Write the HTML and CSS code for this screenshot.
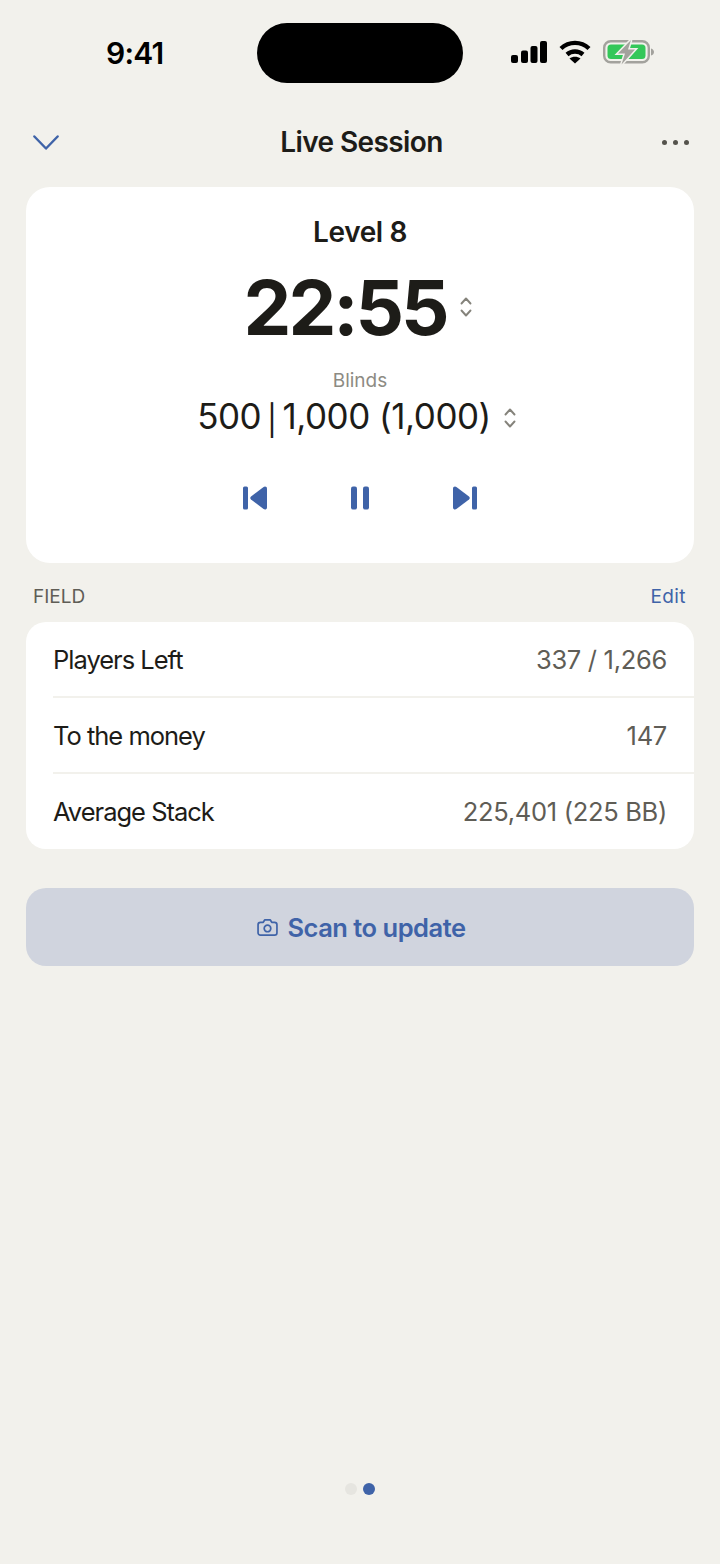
FILE: index.html
```html
<!DOCTYPE html>
<html lang="en">
<head>
    <meta charset="UTF-8">
    <meta name="viewport" content="width=device-width, initial-scale=1.0">
    <title>Live Session</title>
    <link rel="stylesheet" href="styles.css">
</head>
<body>
    <!-- Status bar -->
    <div class="status-bar">
        <div class="status-time">9:41</div>
        <div class="island"></div>
        <div class="status-icons">
            <svg width="36" height="24" viewBox="0 0 36 24">
                <rect x="0" y="15" width="7" height="8" rx="2"/>
                <rect x="10" y="10.500" width="7" height="12.500" rx="2"/>
                <rect x="19.500" y="6" width="7" height="17" rx="2"/>
                <rect x="29" y="1" width="7" height="22" rx="2"/>
            </svg>
            <svg width="32" height="24" viewBox="0 0 32 24" fill="none" stroke="#000" stroke-width="4.400">
                <path d="M2 8.500C10 1 22 1 30 8.500"/>
                <path d="M8 14.500C12.500 10.500 19.500 10.500 24 14.500"/>
                <path d="M16 23.500L10.500 18.500C13.500 16 18.500 16 21.500 18.500Z" fill="#000" stroke="none"/>
            </svg>
            <svg width="52" height="26" viewBox="0 0 52 26">
                <rect x="1.200" y="2.200" width="44.600" height="21" rx="6.500" fill="none" stroke="#a3a29d" stroke-width="2.400"/>
                <rect x="4.500" y="5.500" width="38" height="14.500" rx="3.500" fill="#34c759"/>
                <path d="M48 9.500C50 10 51 11.500 51 13C51 14.500 50 16 48 16.500Z" fill="#a3a29d"/>
                <path d="M28 1L15 14.500H22L18.500 25.500L32 10.500H25Z" fill="#a3a29d" stroke="#f2f1ec" stroke-width="3" paint-order="stroke"/>
            </svg>
        </div>
    </div>

    <!-- Nav -->
    <div class="nav">
        <svg class="nav-back" width="26" height="15" viewBox="0 0 28 16" fill="none" stroke="#3f63a8" stroke-width="2.600" stroke-linecap="round" stroke-linejoin="round">
            <path d="M1.500 1.500L14 14.500L26.500 1.500"/>
        </svg>
        <div class="nav-title">Live Session</div>
        <div class="nav-more"><span></span><span></span><span></span></div>
    </div>

    <!-- Timer card -->
    <div class="card timer-card">
        <div class="level">Level 8</div>
        <div class="clock-row">
            <div class="clock">22:55</div>
            <svg class="stepper" width="12" height="20" viewBox="0 0 12 20" fill="none" stroke="#85837b" stroke-width="1.900" stroke-linecap="round" stroke-linejoin="round">
                <path d="M1.500 6.500L6 1.500L10.500 6.500"/>
                <path d="M1.500 13.500L6 18.500L10.500 13.500"/>
            </svg>
        </div>
        <div class="blinds-label">Blinds</div>
        <div class="blinds-row">
            <div class="blinds">500<span class="pipe">|</span>1,000 (1,000)</div>
            <svg class="stepper" width="12" height="20" viewBox="0 0 12 20" fill="none" stroke="#85837b" stroke-width="1.900" stroke-linecap="round" stroke-linejoin="round">
                <path d="M1.500 6.500L6 1.500L10.500 6.500"/>
                <path d="M1.500 13.500L6 18.500L10.500 13.500"/>
            </svg>
        </div>
        <div class="controls">
            <svg width="24" height="24" viewBox="0 0 24 24" fill="#3f63a8">
                <rect x="0" y="0.500" width="5" height="23" rx="1.500"/>
                <path d="M22 0.500C23.200 0.500 24 1.300 24 2.500V21.500C24 22.700 23.200 23.500 22 23.500C21.500 23.500 21 23.300 20.600 23L8 13.500C7 12.700 7 11.300 8 10.500L20.600 1C21 0.700 21.500 0.500 22 0.500Z"/>
            </svg>
            <svg width="20" height="24" viewBox="0 0 20 24" fill="#3f63a8">
                <rect x="1" y="0.500" width="6" height="23" rx="2"/>
                <rect x="13" y="0.500" width="6" height="23" rx="2"/>
            </svg>
            <svg width="24" height="24" viewBox="0 0 24 24" fill="#3f63a8">
                <rect x="19" y="0.500" width="5" height="23" rx="1.500"/>
                <path d="M2 0.500C0.800 0.500 0 1.300 0 2.500V21.500C0 22.700 0.800 23.500 2 23.500C2.500 23.500 3 23.300 3.400 23L16 13.500C17 12.700 17 11.300 16 10.500L3.400 1C3 0.700 2.500 0.500 2 0.500Z"/>
            </svg>
        </div>
    </div>

    <!-- Field -->
    <div class="section-head">
        <div class="section-title">FIELD</div>
        <div class="section-edit">Edit</div>
    </div>
    <div class="card field-card">
        <div class="field-row">
            <div class="field-label">Players Left</div>
            <div class="field-value">337 / 1,266</div>
        </div>
        <div class="field-row">
            <div class="field-label">To the money</div>
            <div class="field-value">147</div>
        </div>
        <div class="field-row">
            <div class="field-label">Average Stack</div>
            <div class="field-value">225,401 (225 BB)</div>
        </div>
    </div>

    <div class="scan-button">
        <svg width="21" height="17" viewBox="0 0 22 18" fill="none" stroke="#3f63a8" stroke-width="1.800" stroke-linejoin="round">
            <path d="M3.500 3.500H6.500L8 1H14L15.500 3.500H18.500C19.900 3.500 21 4.600 21 6V14.500C21 15.900 19.900 17 18.500 17H3.500C2.100 17 1 15.900 1 14.500V6C1 4.600 2.100 3.500 3.500 3.500Z"/>
            <circle cx="11" cy="10" r="3.500"/>
        </svg>
        <span>Scan to update</span>
    </div>

    <div class="dots">
        <span class="dot"></span>
        <span class="dot active"></span>
    </div>
</body>
</html>
```

FILE: styles.css
```css
* {
    box-sizing: border-box;
}

body {
    margin: 0;
    width: 720px;
    height: 1564px;
    background: #f2f1ec;
    color: #1d1c18;
    font-family: Inter, "Liberation Sans", sans-serif;
    display: flex;
    flex-direction: column;
    overflow: hidden;
}

/* Status bar */
.status-bar {
    display: grid;
    grid-template-columns: 1fr 206px 1fr;
    align-items: center;
    padding-top: 23px;
}

.status-time {
    padding-left: 106px;
    font-size: 30px;
    font-weight: 600;
    letter-spacing: -0.8px;
    color: #000;
}

.island {
    height: 60px;
    background: #000;
    border-radius: 30px;
}

.status-icons {
    display: flex;
    align-items: center;
    gap: 12px;
    padding-left: 48px;
    margin-top: -2px;
}

/* Nav */
.nav {
    display: flex;
    justify-content: space-between;
    align-items: center;
    height: 40px;
    margin-top: 39px;
    padding: 0 31px 0 33px;
}

.nav-title {
    flex: 1;
    text-align: center;
    font-size: 28px;
    font-weight: 600;
    letter-spacing: -0.6px;
    padding-left: 2px;
}

.nav-more {
    display: flex;
    gap: 6px;
}

.nav-more span {
    width: 5px;
    height: 5px;
    border-radius: 50%;
    background: #55534c;
}

/* Cards */
.card {
    margin: 0 26px;
    background: #fff;
}

.timer-card {
    margin-top: 25px;
    height: 376px;
    border-radius: 24px;
    display: flex;
    flex-direction: column;
    align-items: center;
    padding-top: 27px;
}

.level {
    font-size: 28px;
    font-weight: 600;
    letter-spacing: -0.4px;
    line-height: 36px;
}

.clock-row {
    display: flex;
    align-items: center;
    gap: 14px;
    margin-top: 11px;
    padding-right: 4px;
}

.clock {
    font-size: 76px;
    font-weight: 700;
    line-height: 92px;
    letter-spacing: -3.100px;
}

.blinds-label {
    margin-top: 16px;
    font-size: 19px;
    line-height: 24px;
    color: #8d8b83;
}

.blinds-row {
    display: flex;
    align-items: center;
    gap: 13px;
    padding-right: 7px;
}

.blinds {
    font-size: 35px;
    line-height: 46px;
    letter-spacing: -0.5px;
}

.pipe {
    margin: 0 6px;
    font-size: 30px;
    vertical-align: -2px;
}

.controls {
    display: flex;
    align-items: center;
    gap: 83px;
    margin-top: 43px;
}

/* Field section */
.section-head {
    display: flex;
    justify-content: space-between;
    align-items: center;
    height: 59px;
    padding: 8px 34px 0 33px;
    font-size: 19px;
}

.section-title {
    color: #5f5d56;
}

.section-edit {
    color: #3f63a8;
    letter-spacing: 0.4px;
}

.field-card {
    border-radius: 20px;
    overflow: hidden;
}

.field-row {
    display: flex;
    justify-content: space-between;
    align-items: center;
    height: 76px;
    margin-left: 27px;
    padding-right: 27px;
    border-bottom: 2px solid #f2f1ec;
    font-size: 25.500px;
    letter-spacing: -0.3px;
}

.field-row:last-child {
    border-bottom: none;
    height: 75px;
}

.field-label {
    letter-spacing: -1px;
}

.field-value {
    color: #5f5d56;
}

/* Scan button */
.scan-button {
    display: flex;
    justify-content: center;
    align-items: center;
    gap: 10px;
    height: 78px;
    margin: 39px 26px 0;
    padding-left: 2px;
    border-radius: 20px;
    background: #d0d4de;
    color: #3f63a8;
    font-size: 25.500px;
    font-weight: 600;
    letter-spacing: -0.5px;
}

/* Page dots */
.dots {
    display: flex;
    justify-content: center;
    gap: 6px;
    margin-top: auto;
    margin-bottom: 69px;
}

.dot {
    width: 12px;
    height: 12px;
    border-radius: 50%;
    background: #e6e5e0;
}

.dot.active {
    background: #3f63a8;
}
```
